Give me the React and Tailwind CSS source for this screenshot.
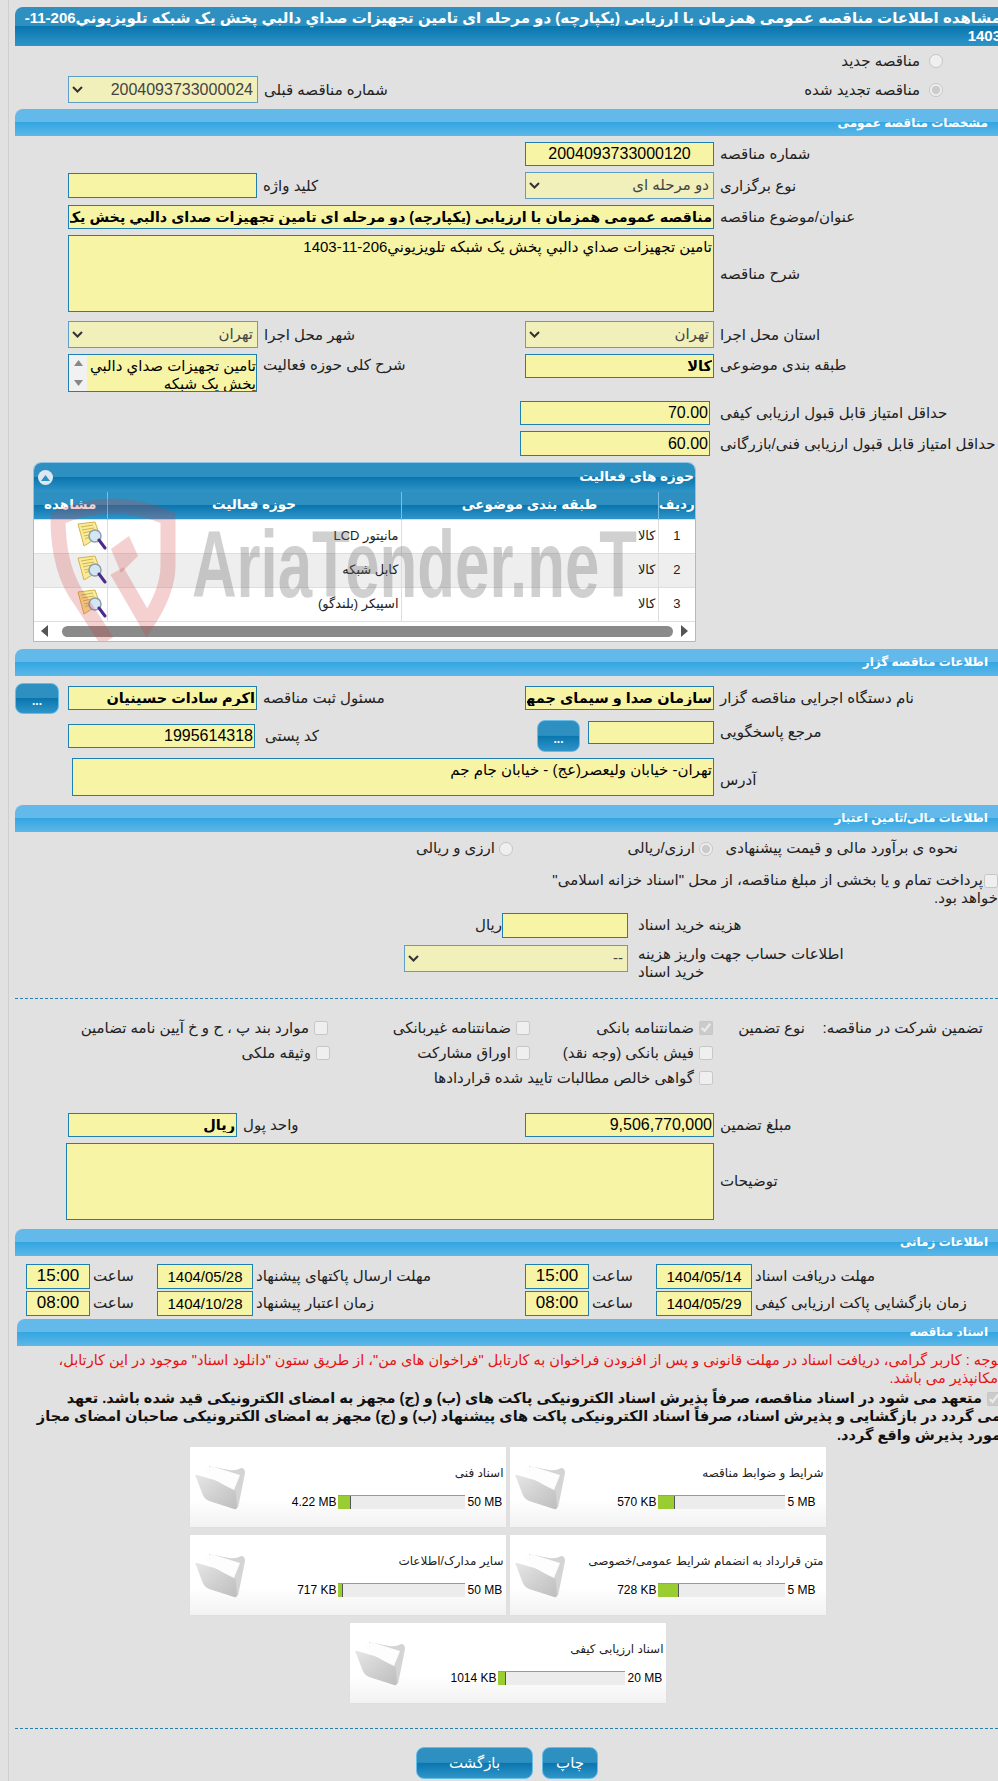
import React from "react";

const fieldCls = "border border-[#1f7fb0] bg-[#f7f5a5] text-black outline-none";
const barDark = "bg-[linear-gradient(#2e90c0_0%,#2e90c0_48%,#0a76ae_50%,#2f95c9_100%)]";

const Field = ({ value = "", w, h = 24, bold, center, size = 14.5, className = "" }) => (
  <input
    readOnly
    dir="rtl"
    value={value}
    style={{ width: w, height: h, fontSize: size }}
    className={`${fieldCls} shrink-0 px-[1px] ${bold ? "font-bold" : ""} ${center ? "text-center" : ""} ${className}`}
  />
);

const Area = ({ value = "", w, h }) => (
  <textarea
    readOnly
    dir="rtl"
    value={value}
    style={{ width: w, height: h }}
    className={`${fieldCls} block shrink-0 resize-none overflow-hidden px-[1px] pt-[2px] text-[15px] leading-[18px]`}
  />
);

// the small textarea keeps its native scrollbar look: two arrows on a pale strip
const ScrollArea = ({ value, w, h }) => (
  <div style={{ width: w, height: h }} className={`${fieldCls} flex shrink-0`}>
    <div className="flex w-[18px] shrink-0 flex-col items-center justify-between bg-[#f1f1f1] py-[5px]">
      <svg width="9" height="6" viewBox="0 0 9 6"><path d="M4.5 0 9 6H0z" fill="#888" /></svg>
      <svg width="9" height="6" viewBox="0 0 9 6"><path d="M4.5 6 9 0H0z" fill="#888" /></svg>
    </div>
    <textarea
      readOnly
      dir="rtl"
      value={value}
      className="min-w-0 flex-1 resize-none overflow-hidden bg-transparent pt-[2px] text-[15px] leading-[18px] text-black outline-none"
    />
  </div>
);

const Pick = ({ value, w, h = 27, size = 15 }) => (
  <div className="relative shrink-0" style={{ width: w, height: h }}>
    <select
      disabled
      dir="rtl"
      style={{ fontSize: size }}
      className="h-full w-full appearance-none border border-[#5d9fc9] bg-[#f1efba] pl-[18px] pr-[4px] text-[#444] opacity-100"
    >
      <option>{value}</option>
    </select>
    <svg className="absolute left-[4px] top-[10px]" width="11" height="7" viewBox="0 0 11 7">
      <path d="M1 1l4.5 4.5L10 1" fill="none" stroke="#333" strokeWidth="2" />
    </svg>
  </div>
);

const Label = ({ children, ml = "ml-[6px]", className = "" }) => (
  <span dir="rtl" className={`${ml} text-left text-[15px] leading-[18px] text-[#222] ${className}`}>
    {children}
  </span>
);

const Section = ({ title, className = "ml-[6px]" }) => (
  <div
    dir="rtl"
    className={`flex h-[27px] items-center rounded-tl-[8px] bg-[linear-gradient(#63baea_0%,#63baea_48%,#35a6e1_50%,#5cb7e8_100%)] pr-[10px] text-[12px] font-bold text-white ${className}`}
  >
    {title}
  </div>
);

const Row = ({ left, right, className = "", align = "items-start" }) => (
  <div className={`flex ${className}`}>
    <div className={`flex w-[516px] shrink-0 pl-[59px] ${align}`}>{left}</div>
    <div className={`flex flex-1 ${align}`}>{right}</div>
  </div>
);

const Radio = ({ checked }) => (
  <input type="radio" disabled defaultChecked={checked} className="h-[14px] w-[14px] shrink-0" />
);

const Check = ({ checked, label, className = "" }) => (
  <div className={`flex items-center ${className}`}>
    <span dir="rtl" className="mr-[5px] whitespace-nowrap text-[15px] text-[#222]">{label}</span>
    <input type="checkbox" disabled defaultChecked={checked} className="h-[14px] w-[14px] shrink-0" />
  </div>
);

const DocIcon = () => (
  <svg width="30" height="30" viewBox="0 0 30 30" className="ml-[43px] block">
    <path d="M1 3 18 1l5 14-16 10z" fill="#f8ec9a" stroke="#d3b34b" />
    <path d="M4 6l12-2M5 9l12-2M6 12l8-2M7 15l5-1M8 18l4-2" stroke="#d3b34b" />
    <circle cx="18" cy="15" r="6" fill="#d5e6f3" stroke="#8b9db0" strokeWidth="1.5" />
    <path d="M22 19l6 8" stroke="#4b2a8c" strokeWidth="3" strokeLinecap="round" />
  </svg>
);

const rows = [
  ["1", "کالا", "مانیتور LCD"],
  ["2", "کالا", "کابل شبکه"],
  ["3", "کالا", "اسپیکر (بلندگو)"],
];

const Activities = () => (
  <div className="relative ml-[24px] mt-[6px] w-[663px] overflow-hidden rounded-t-[8px] border border-[#8fc4e4] bg-white">
    <div dir="rtl" className={`flex h-[29px] items-center justify-between pl-[4px] pr-[1px] text-[13.5px] font-bold text-white ${barDark}`}>
      <span>حوزه های فعالیت</span>
      <span className="flex h-[15px] w-[15px] items-center justify-center rounded-full bg-[#dfe8f2]">
        <svg width="9" height="6" viewBox="0 0 9 6"><path d="M4.5 0 9 6H0z" fill="#2e90c0" /></svg>
      </span>
    </div>
    <table dir="rtl" className="w-full table-fixed border-collapse text-[13px] text-[#222]">
      <colgroup>
        <col className="w-[37px]" />
        <col className="w-[257px]" />
        <col className="w-[294px]" />
        <col />
      </colgroup>
      <thead>
        <tr className={`h-[27px] text-white ${barDark}`}>
          {["ردیف", "طبقه بندی موضوعی", "حوزه فعالیت", "مشاهده"].map((t) => (
            <th key={t} className="border-l border-[#7cbfe3] px-0 text-center text-[13.5px] font-bold last:border-l-0">{t}</th>
          ))}
        </tr>
      </thead>
      <tbody>
        {rows.map((r, i) => (
          <tr key={r[0]} className={`h-[34px] border-b border-t border-[#ddd] ${i === 1 ? "bg-[#eeeeee]" : "bg-white"}`}>
            <td className="border-l border-[#ddd] text-center">{r[0]}</td>
            <td className="border-l border-[#ddd] pr-[2px]">{r[1]}</td>
            <td className="border-l border-[#ddd] pr-[2px]">{r[2]}</td>
            <td><DocIcon /></td>
          </tr>
        ))}
      </tbody>
    </table>
    <div className="flex h-[19px] items-center justify-between px-[7px]">
      <svg width="8" height="12" viewBox="0 0 8 12"><path d="M7 0v12L0 6z" fill="#555" /></svg>
      <div className="ml-[6px] h-[11px] w-[611px] rounded-full bg-[#8a8a8a]" />
      <svg width="8" height="12" viewBox="0 0 8 12"><path d="M1 0v12l7-6z" fill="#555" /></svg>
    </div>
    {/* watermark over the table */}
    <svg className="pointer-events-none absolute left-0 top-0" width="663" height="179" viewBox="33 462 663 179">
      <path d="M106 640 80 600Q57 570 57 517 112 493 167 517V565Q167 590 146 622L116 570" fill="none" stroke="#d03a3a" strokeOpacity=".24" strokeWidth="15" />
      <path d="M110 548 128 535 137 555 120 572z" fill="#d03a3a" fillOpacity=".24" />
    </svg>
    <div className="pointer-events-none absolute left-[158px] top-[54px] origin-left scale-x-[0.65] whitespace-nowrap text-[95px] font-bold leading-none text-[#666] opacity-30">
      AriaTender.neT
    </div>
  </div>
);

const Folder = () => (
  <svg width="54" height="48" viewBox="0 0 54 48" className="shrink-0">
    <defs>
      <linearGradient id="folderFront" x1="0" y1="0" x2="1" y2="1">
        <stop offset="0" stopColor="#e6e6e6" />
        <stop offset="1" stopColor="#bdbdbd" />
      </linearGradient>
    </defs>
    <path d="M15 1 35 5Q42 6 47 3 51 3 51 8L44 43 20 20z" fill="#d4d4d4" />
    <path d="M11 6 17 1 46 10 40 25 18 14z" fill="#fdfdfd" />
    <path d="M2 12Q0 10 3 10L17 14Q25 16 30 21L40 25Q42 26 42 29L43 42Q43 45 40 44L15 36Q10 34 8 28z" fill="url(#folderFront)" />
  </svg>
);

const DocCard = ({ title, used, max, fill, bar = 127 }) => (
  <div dir="ltr" className="flex h-[80px] w-[316px] bg-[linear-gradient(#ffffff_0%,#ffffff_65%,#f2f2f2_100%)] pl-[4px] pt-[18px] shadow-[0_0_2px_#ddd]">
    <Folder />
    <div className="ml-[16px] flex min-w-0 flex-1 flex-col pr-[4px]">
      <div dir="rtl" className="-mr-[2px] h-[30px] whitespace-nowrap text-[12px] leading-[16px] text-[#222]">{title}</div>
      <div className="flex items-start text-[12px] leading-[14px] text-black">
        <span className="flex-1 whitespace-nowrap pr-[1px] text-right">{used}</span>
        <div className="h-[14px] shrink-0 border-t border-[#999] bg-[#ececec]" style={{ width: bar }}>
          <div className="h-full border-r border-[#555] bg-[#9acd32]" style={{ width: fill }} />
        </div>
        <span className="ml-[3px] w-[34px] whitespace-nowrap">{max}</span>
      </div>
    </div>
  </div>
);

const Button = ({ children, w, h, className = "" }) => (
  <button
    style={{ width: w, height: h }}
    className={`shrink-0 rounded-[8px] border border-[#67bce8] text-white ${barDark} ${className}`}
  >
    {children}
  </button>
);

export default function App() {
  return (
    <div className="relative h-[1781px] w-[998px] overflow-hidden bg-[#e1e1e1] font-['Liberation_Sans','DejaVu_Sans',sans-serif]">
      <div className="ml-[8px] h-full border-l border-[#cfcfcf] pt-[7px]">
        <div dir="rtl" className={`-mr-[3px] ml-[6px] h-[39px] whitespace-nowrap rounded-tl-[8px] text-right text-[15px] font-bold leading-[18px] text-white ${barDark}`}>
          <div className="pt-[2px]">مشاهده اطلاعات مناقصه عمومی همزمان با ارزیابی (یکپارچه) دو مرحله ای تامین تجهیزات صداي دالبي پخش يک شبکه تلويزيوني206-11-</div>
          <div>1403</div>
        </div>

        <Row
          className="h-[30px]"
          align="items-center"
          right={
            <div className="ml-[195px] flex w-[223px] items-center justify-end gap-[9px]">
              <Label>مناقصه جدید</Label>
              <Radio />
            </div>
          }
        />
        <Row
          align="items-center"
          left={
            <>
              <Pick value="2004093733000024" w={190} size={16} />
              <Label>شماره مناقصه قبلی</Label>
            </>
          }
          right={
            <div className="ml-[195px] flex w-[223px] items-center justify-end gap-[9px]">
              <Label>مناقصه تجدید شده</Label>
              <Radio checked />
            </div>
          }
        />

        <Section title="مشخصات مناقصه عمومی" className="ml-[6px] mt-[6px]" />

        <Row
          className="mt-[6px]"
          align="items-center"
          right={
            <>
              <Field value="2004093733000120" w={189} center size={16} />
              <Label>شماره مناقصه</Label>
            </>
          }
        />
        <Row
          className="mt-[6px]"
          align="items-center"
          left={
            <>
              <Field w={189} h={25} />
              <Label>کلید واژه</Label>
            </>
          }
          right={
            <>
              <Pick value="دو مرحله ای" w={189} />
              <Label>نوع برگزاری</Label>
            </>
          }
        />
        <div className="ml-[59px] mt-[6px] flex items-center">
          <Field value="مناقصه عمومی همزمان با ارزیابی (یکپارچه) دو مرحله ای تامین تجهیزات صداي دالبي پخش يک شبکه تلويزيوني206-11-1403" w={646} bold size={14.3} />
          <Label>عنوان/موضوع مناقصه</Label>
        </div>
        <div className="ml-[59px] mt-[6px] flex items-center">
          <Area value="تامین تجهیزات صداي دالبي پخش يک شبکه تلويزيوني206-11-1403" w={646} h={77} />
          <Label>شرح مناقصه</Label>
        </div>
        <Row
          className="mt-[9px]"
          align="items-center"
          left={
            <>
              <Pick value="تهران" w={190} />
              <Label>شهر محل اجرا</Label>
            </>
          }
          right={
            <>
              <Pick value="تهران" w={189} />
              <Label>استان محل اجرا</Label>
            </>
          }
        />
        <Row
          className="mt-[6px]"
          left={
            <>
              <ScrollArea value="تامین تجهیزات صداي دالبي پخش يک شبکه" w={189} h={38} />
              <Label className="mt-[2px]">شرح کلی حوزه فعالیت</Label>
            </>
          }
          right={
            <>
              <Field value="کالا" w={189} bold />
              <Label className="mt-[2px]">طبقه بندی موضوعی</Label>
            </>
          }
        />
        <div className="ml-[511px] mt-[9px] flex items-center">
          <Field value="70.00" w={190} size={16} />
          <Label ml="ml-[10px]">حداقل امتیاز قابل قبول ارزیابی کیفی</Label>
        </div>
        <div className="ml-[511px] mt-[6px] flex items-center">
          <Field value="60.00" w={190} h={25} size={16} />
          <Label ml="ml-[10px]">حداقل امتیاز قابل قبول ارزیابی فنی/بازرگانی</Label>
        </div>

        <Activities />

        <Section title="اطلاعات مناقصه گزار" className="ml-[6px] mt-[7px]" />

        <div className="ml-[6px] mt-[7px] flex h-[31px] items-center">
          <Button w={44} h={31} className="mr-[9px] pt-[6px] text-[12px] font-bold">...</Button>
          <Field value="اکرم سادات حسینیان" w={189} bold />
          <Label className="w-[262px]">مسئول ثبت مناقصه</Label>
          <Field value="سازمان صدا و سیمای جمهوری اسلامی ایران" w={189} bold />
          <Label>نام دستگاه اجرایی مناقصه گزار</Label>
        </div>
        <div className="ml-[59px] mt-[6px] flex h-[32px] items-start">
          <div className="mt-[4px] flex items-center">
            <Field value="1995614318" w={187} size={16} />
            <Label ml="ml-[10px]" className="w-[272px]">کد پستی</Label>
          </div>
          <Button w={43} h={32} className="pt-[6px] text-[12px] font-bold">...</Button>
          <Field w={126} h={23} className="ml-[8px] mt-[1px]" />
          <Label className="mt-[3px]">مرجع پاسخگویی</Label>
        </div>
        <div className="ml-[63px] mt-[6px] flex items-center">
          <Area value="تهران- خیابان ولیعصر(عج) - خیابان جام جم" w={642} h={38} />
          <Label className="mt-[6px]">آدرس</Label>
        </div>

        <Section title="اطلاعات مالی/تامین اعتبار" className="ml-[6px] mt-[9px]" />

        <div dir="rtl" className="mt-[7px] flex h-[20px] items-center pr-[40px] text-[15px] text-[#222]">
          <span className="w-[238px] whitespace-nowrap text-right">نحوه ی برآورد مالی و قیمت پیشنهادی</span>
          <span className="mr-[7px] flex w-[200px] items-center gap-[4px]"><Radio checked /> ارزی/ریالی</span>
          <span className="flex items-center gap-[4px]"><Radio /> ارزی و ریالی</span>
        </div>
        <div dir="rtl" className="mt-[12px] whitespace-nowrap text-[15px] leading-[18px] text-[#222]">
          <input type="checkbox" disabled className="ml-[1px] inline-block h-[14px] w-[14px] align-middle" />
          پرداخت تمام و یا بخشی از مبلغ مناقصه، از محل "اسناد خزانه اسلامی"
          <div>خواهد بود.</div>
        </div>
        <div className="ml-[470px] mt-[6px] flex items-center">
          <Label ml="ml-0" className="w-[23px] whitespace-nowrap">ریال</Label>
          <Field w={126} h={25} />
          <Label ml="ml-[10px]">هزینه خرید اسناد</Label>
        </div>
        <div className="ml-[395px] mt-[7px] flex items-start">
          <Pick value="--" w={224} />
          <Label ml="ml-[10px]" className="w-[215px]">اطلاعات حساب جهت واریز هزینه خرید اسناد</Label>
        </div>

        <div className="ml-[6px] mt-[17px] border-t border-dashed border-[#2a7fa8]" />

        <div className="ml-[72px] mt-[17px] grid grid-cols-[247px_202px_183px_92px_178px] grid-rows-[25px_25px_25px] items-center">
          <Check className="justify-end" label="موارد بند پ ، ح و خ آیین نامه تضامین" />
          <Check className="justify-end" label="ضمانتنامه غیربانکی" />
          <Check className="justify-end" checked label="ضمانتنامه بانکی" />
          <span dir="rtl" className="text-right text-[15px] text-[#222]">نوع تضمین</span>
          <span dir="rtl" className="text-right text-[15px] text-[#222]">تضمین شرکت در مناقصه:</span>
          <Check className="col-start-1 -mr-[2px] justify-end" label="وثیقه ملکی" />
          <Check className="justify-end" label="اوراق مشارکت" />
          <Check className="justify-end" label="فیش بانکی (وجه نقد)" />
          <Check className="col-span-3 col-start-1 justify-end" label="گواهی خالص مطالبات تایید شده قراردادها" />
        </div>

        <Row
          className="mt-[22px]"
          align="items-center"
          left={
            <>
              <Field value="ریال" w={169} bold />
              <Label>واحد پول</Label>
            </>
          }
          right={
            <>
              <Field value="9,506,770,000" w={189} size={16} />
              <Label>مبلغ تضمین</Label>
            </>
          }
        />
        <div className="ml-[57px] mt-[6px] flex items-center">
          <Area w={648} h={77} />
          <Label>توضیحات</Label>
        </div>

        <Section title="اطلاعات زمانی" className="ml-[6px] mt-[9px]" />

        {[
          [["15:00", "1404/05/28", "مهلت ارسال پاکتهای پیشنهاد"], ["15:00", "1404/05/14", "مهلت دریافت اسناد"]],
          [["08:00", "1404/10/28", "زمان اعتبار پیشنهاد"], ["08:00", "1404/05/29", "زمان بازگشایی پاکت ارزیابی کیفی"]],
        ].map((row, i) => (
          <div key={i} className={`ml-[17px] flex ${i === 0 ? "mt-[8px]" : "mt-[2px]"}`}>
            {row.map((c, j) => (
              <div key={j} className={`flex items-center ${j === 0 ? "w-[499px]" : ""}`}>
                <Field value={c[0]} w={64} h={25} center size={17} />
                <Label ml="ml-[3px]" className="w-[64px]">ساعت</Label>
                <Field value={c[1]} w={96} h={25} center size={15} />
                <Label ml="ml-[3px]">{c[2]}</Label>
              </div>
            ))}
          </div>
        ))}

        <Section title="اسناد مناقصه" className="ml-[8px] mt-[3px]" />

        <div dir="rtl" className="-mr-[4px] ml-[8px] mt-[5px] text-[14.5px] leading-[18px] text-[#e81010]">
          توجه : کاربر گرامی، دریافت اسناد در مهلت قانونی و پس از افزودن فراخوان به کارتابل "فراخوان های من"، از طریق ستون "دانلود اسناد" موجود در این کارتابل،
          <div>امکانپذیر می باشد.</div>
        </div>
        <div dir="rtl" className="-mr-[3px] mt-[2px] whitespace-nowrap text-[14.5px] font-bold leading-[18.5px] text-[#111]">
          <div>
            <input type="checkbox" disabled defaultChecked className="ml-[5px] inline-block h-[14px] w-[14px] align-middle" />
            متعهد می شود در اسناد مناقصه، صرفاً پذیرش اسناد الکترونیکی پاکت های (ب) و (ج) مجهز به امضای الکترونیکی قید شده باشد. تعهد
          </div>
          <div>می گردد در بازگشایی و پذیرش اسناد، صرفاً اسناد الکترونیکی پاکت های پیشنهاد (ب) و (ج) مجهز به امضای الکترونیکی صاحبان امضای مجاز</div>
          <div>مورد پذیرش واقع گردد.</div>
        </div>

        <div className="mt-[3px] flex flex-col items-center gap-[8px] pl-[8px]">
          <div className="flex gap-[4px]">
            <DocCard title="اسناد فنی" used="4.22 MB" max="50 MB" fill={13} />
            <DocCard title="شرایط و ضوابط مناقصه" used="570 KB" max="5 MB" fill={17} />
          </div>
          <div className="flex gap-[4px]">
            <DocCard title="سایر مدارک/اطلاعات" used="717 KB" max="50 MB" fill={5} />
            <DocCard title="متن قرارداد به انضمام شرایط عمومی/خصوصی" used="728 KB" max="5 MB" fill={21} />
          </div>
          <DocCard title="اسناد ارزیابی کیفی" used="1014 KB" max="20 MB" fill={8} />
        </div>

        <div className="ml-[6px] mt-[25px] border-t border-dashed border-[#2a7fa8]" />

        <div className="mt-[18px] flex gap-[9px] pl-[407px] text-[15px]">
          <Button w={117} h={32}>بازگشت</Button>
          <Button w={56} h={32}>چاپ</Button>
        </div>
      </div>
    </div>
  );
}
